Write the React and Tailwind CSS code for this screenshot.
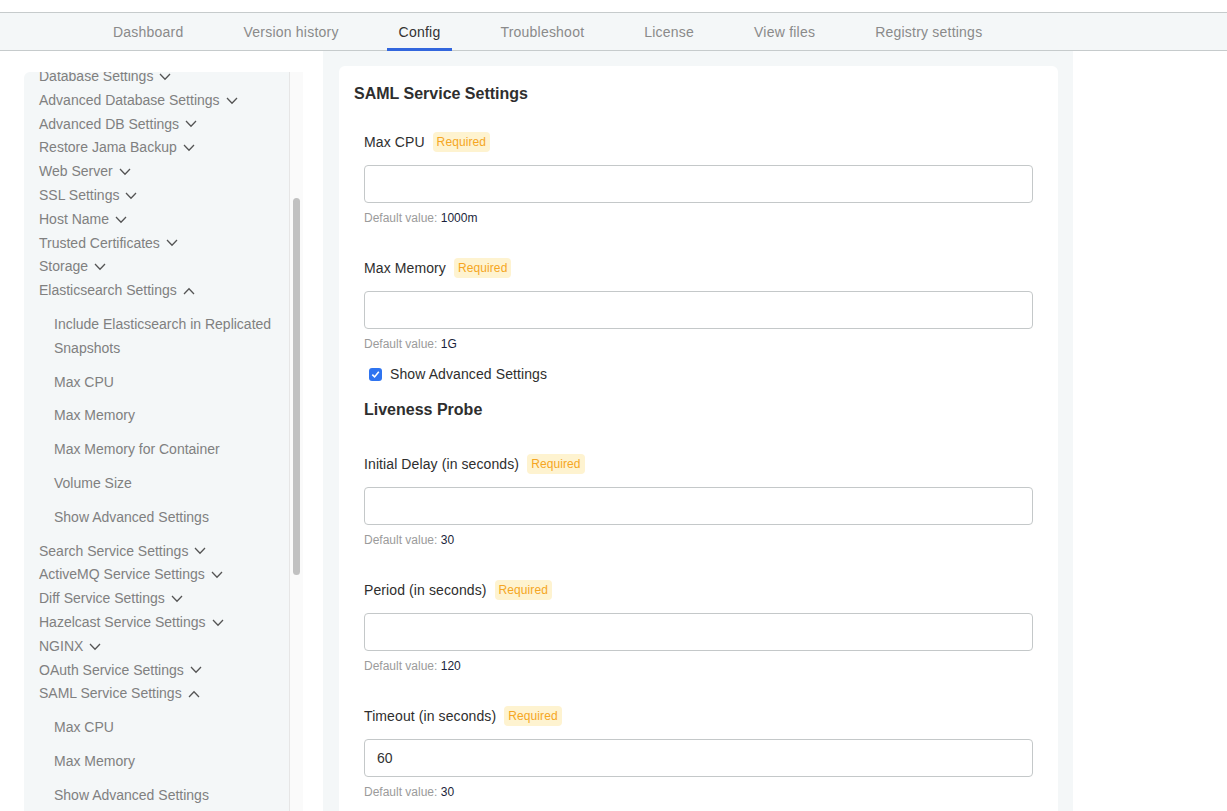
import { useState } from "react"

const tabs = ["Dashboard", "Version history", "Config", "Troubleshoot", "License", "View files", "Registry settings"]

const sidebar = [
  { label: "Database Settings" },
  { label: "Advanced Database Settings" },
  { label: "Advanced DB Settings" },
  { label: "Restore Jama Backup" },
  { label: "Web Server" },
  { label: "SSL Settings" },
  { label: "Host Name" },
  { label: "Trusted Certificates" },
  { label: "Storage" },
  {
    label: "Elasticsearch Settings",
    open: true,
    items: [
      "Include Elasticsearch in Replicated Snapshots",
      "Max CPU",
      "Max Memory",
      "Max Memory for Container",
      "Volume Size",
      "Show Advanced Settings",
    ],
  },
  { label: "Search Service Settings" },
  { label: "ActiveMQ Service Settings" },
  { label: "Diff Service Settings" },
  { label: "Hazelcast Service Settings" },
  { label: "NGINX" },
  { label: "OAuth Service Settings" },
  {
    label: "SAML Service Settings",
    open: true,
    items: ["Max CPU", "Max Memory", "Show Advanced Settings"],
  },
]

function Chevron({ up }) {
  return (
    <svg width="12" height="8" viewBox="0 0 12 8" className="ml-[6px] shrink-0">
      <path
        d={up ? "M1 7 L6 1.8 L11 7" : "M1 1 L6 6.2 L11 1"}
        fill="none"
        stroke="#555"
        strokeWidth="1.3"
      />
    </svg>
  )
}

function Field({ label, value, def }) {
  return (
    <div>
      <div className="flex items-center h-5 gap-2">
        <span className="text-sm text-[#2e2e2e] tracking-[0.1px]">{label}</span>
        <span className="text-xs leading-4 px-[4px] py-[2px] rounded-sm bg-[#fef3d0] text-[#f5a623] tracking-[0.1px]">Required</span>
      </div>
      <input
        defaultValue={value}
        className="mt-[13px] block w-full h-[38px] px-3 text-sm text-[#333] border border-[#c4c8c9] rounded-[4px] outline-none bg-white"
      />
      <div className="mt-[7px] text-xs leading-4">
        <span className="text-[#9b9b9b]">Default value: </span>
        <span className="text-[#1b1f3b]">{def}</span>
      </div>
    </div>
  )
}

export default function App() {

  const [advanced, setAdvanced] = useState(true)

  return (
    <div className="h-screen overflow-hidden flex flex-col bg-white font-['Liberation_Sans',Arial,sans-serif]">

      {/* TOP NAV */}
      <div className="mt-[12px] h-[39px] shrink-0 bg-[#f4f7f8] border-y border-[#c6cbcc] flex items-stretch pl-[101px] gap-9">
        {tabs.map((t) => (
          <div
            key={t}
            className={
              t === "Config"
                ? "px-3 flex items-center text-sm tracking-[0.22px] text-[#323232] border-b-[3px] border-[#3266dd] pt-[3px] -mb-px"
                : "px-3 flex items-center text-sm tracking-[0.22px] text-[#8a8a8a]"
            }
          >
            {t}
          </div>
        ))}
      </div>

      <div className="flex flex-1 min-h-0">

        {/* SIDEBAR */}
        <div className="w-[323px] shrink-0 pl-[24px] pr-[20px] pt-[21px] flex">
          <div className="flex-1 bg-[#f4f7f8] rounded-tl-md overflow-hidden">
            <div className="-mt-[7px] pl-[15px] pr-[8px] text-sm text-[#808080]">
              {sidebar.map((s) => (
                <div key={s.label}>
                  <div className="flex items-center leading-[23.8px]">
                    {s.label}
                    <Chevron up={s.open} />
                  </div>
                  {s.items && (
                    <div className="py-[5px] pl-[15px]">
                      {s.items.map((i) => (
                        <div key={i} className="py-[5px] leading-[23.8px]">{i}</div>
                      ))}
                    </div>
                  )}
                </div>
              ))}
            </div>
          </div>
          {/* scrollbar */}
          <div className="w-[14px] bg-[#fafafa] border-l border-[#e6e6e6] flex justify-center">
            <div className="w-[7px] h-[377px] mt-[126px] rounded-full bg-[#c1c1c1]"></div>
          </div>
        </div>

        {/* CONTENT */}
        <div className="w-[750px] shrink-0 bg-[#f4f7f8] pl-[16px] pr-[15px] pt-[15px]">
          <div className="bg-white rounded-md px-[15px] pt-[18px] pb-10">
            <h2 className="text-base leading-5 font-bold text-[#2e2e2e]">SAML Service Settings</h2>

            <div className="px-[10px]">
              <div className="mt-[28px]">
                <Field label="Max CPU" def="1000m" />
              </div>
              <div className="mt-[32px]">
                <Field label="Max Memory" def="1G" />
              </div>

              <label className="mt-[14px] flex items-center h-4 cursor-pointer">
                <span
                  onClick={() => setAdvanced(!advanced)}
                  className={
                    advanced
                      ? "ml-[5px] w-[13px] h-[13px] rounded-[3px] bg-[#2f74f0] flex items-center justify-center"
                      : "ml-[5px] w-[13px] h-[13px] rounded-[3px] bg-white border border-[#888]"
                  }
                >
                  {advanced && (
                    <svg width="9" height="9" viewBox="0 0 9 9">
                      <path d="M1.3 4.6 L3.6 6.9 L7.8 1.8" fill="none" stroke="#fff" strokeWidth="1.6" />
                    </svg>
                  )}
                </span>
                <span className="ml-[8px] text-sm text-[#2e2e2e] tracking-[0.1px]">Show Advanced Settings</span>
              </label>

              <h3 className="mt-[18px] text-base leading-5 font-bold text-[#2e2e2e]">Liveness Probe</h3>

              <div className="mt-[34px]">
                <Field label="Initial Delay (in seconds)" def="30" />
              </div>
              <div className="mt-[32px]">
                <Field label="Period (in seconds)" def="120" />
              </div>
              <div className="mt-[32px]">
                <Field label="Timeout (in seconds)" value="60" def="30" />
              </div>
            </div>
          </div>
        </div>

        <div className="flex-1 bg-white"></div>
      </div>
    </div>
  )
}
